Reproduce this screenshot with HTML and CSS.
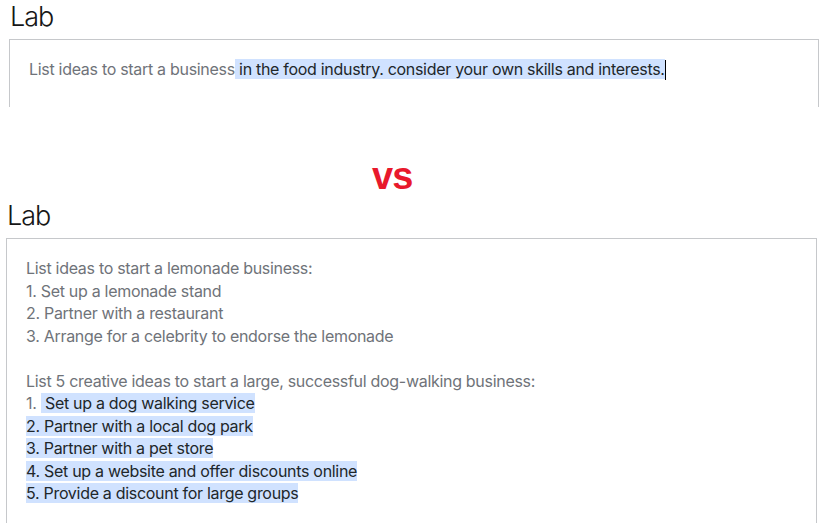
FILE: index.html
```html
<!DOCTYPE html>
<html lang="en">
<head>
<meta charset="utf-8">
<title>Lab vs Lab</title>
<link rel="stylesheet" href="styles.css">
</head>
<body>
<section class="lab lab-top">
  <h2 class="lab-title">Lab</h2>
  <div class="prompt prompt-short">
    <div class="line"><span class="muted">List ideas to start a business</span><span class="sel"> in the food industry. consider your own skills and interests.</span><span class="caret"></span></div>
  </div>
</section>
<div class="vs">vs</div>
<section class="lab lab-bottom">
  <h2 class="lab-title">Lab</h2>
  <div class="prompt prompt-long">
    <div class="line muted">List ideas to start a lemonade business:</div>
    <div class="line muted">1. Set up a lemonade stand</div>
    <div class="line muted">2. Partner with a restaurant</div>
    <div class="line muted">3. Arrange for a celebrity to endorse the lemonade</div>
    <div class="line blank"></div>
    <div class="line muted">List 5 creative ideas to start a large, successful dog-walking business:</div>
    <div class="line"><span class="muted">1. </span><span class="sel"> Set up a dog walking service</span></div>
    <div class="line"><span class="sel">2. Partner with a local dog park</span></div>
    <div class="line"><span class="sel">3. Partner with a pet store</span></div>
    <div class="line"><span class="sel">4. Set up a website and offer discounts online</span></div>
    <div class="line"><span class="sel">5. Provide a discount for large groups</span></div>
  </div>
</section>
</body>
</html>
```

FILE: styles.css
```css
html, body {
  margin: 0;
  padding: 0;
  background: #ffffff;
}

body {
  width: 834px;
  height: 523px;
  overflow: hidden;
  font-family: Inter, "Noto Sans", sans-serif;
}

.lab-title {
  margin: 0 0 5px 0;
  font-size: 27px;
  line-height: 34px;
  font-weight: 300;
  letter-spacing: -1px;
  color: #161616;
}

.lab-top {
  margin-left: 9px;
  width: 810px;
}

.lab-top .lab-title {
  padding-left: 1px;
}

.lab-bottom {
  margin-left: 6px;
  width: 811px;
}

.lab-bottom .lab-title {
  padding-left: 1px;
}

.prompt {
  box-sizing: border-box;
  border: 1px solid #c6c8cb;
  border-bottom: none;
  padding: 18px 19px 0 19px;
  font-size: 16px;
  line-height: 22.5px;
  letter-spacing: -0.3px;
  color: #6f7379;
}

.line {
  white-space: pre;
  height: 22.5px;
}

.prompt-short {
  height: 68px;
}

.prompt-long {
  height: 300px;
}

.muted {
  color: #6f7379;
}

.sel {
  background: #d0e2ff;
  color: #21272a;
}

.caret {
  display: inline-block;
  width: 1px;
  height: 20px;
  background: #000000;
  vertical-align: -5px;
}

.vs {
  margin: 50px 0 4px 0;
  padding-left: 372px;
  font-family: "Liberation Sans", Arial, sans-serif;
  font-weight: 700;
  font-size: 38px;
  line-height: 38px;
  letter-spacing: -1px;
  color: #e8192c;
}
```
